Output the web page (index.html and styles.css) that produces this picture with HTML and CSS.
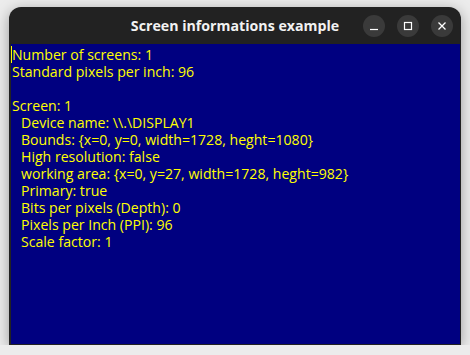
FILE: index.html
```html
<!DOCTYPE html>
<html lang="en">
<head>
    <meta charset="UTF-8">
    <title>Screen informations example</title>
    <link rel="stylesheet" href="styles.css">
</head>
<body>
    <div class="janela">
        <div class="titulo">
            <span class="titulo-texto">Screen informations example</span>
            <div class="botoes">
                <button class="botao">
                    <svg width="10" height="10" viewBox="0 0 10 10"><path d="M1 8.5h8" stroke="#fff" stroke-width="1.2"/></svg>
                </button>
                <button class="botao">
                    <svg width="10" height="10" viewBox="0 0 10 10"><rect x="1.5" y="1.5" width="7" height="7" fill="none" stroke="#fff" stroke-width="1.2"/></svg>
                </button>
                <button class="botao">
                    <svg width="10" height="10" viewBox="0 0 10 10"><path d="M1.5 1.5l7 7M8.5 1.5l-7 7" stroke="#fff" stroke-width="1.3"/></svg>
                </button>
            </div>
        </div>
        <div class="conteudo">
            <div class="linha"><span class="cursor"></span>Number of screens: 1</div>
            <div class="linha">Standard pixels per inch: 96</div>
            <div class="linha"></div>
            <div class="linha">Screen: 1</div>
            <div class="linha recuo">Device name: \\.\DISPLAY1</div>
            <div class="linha recuo">Bounds: {x=0, y=0, width=1728, heght=1080}</div>
            <div class="linha recuo">High resolution: false</div>
            <div class="linha recuo">working area: {x=0, y=27, width=1728, heght=982}</div>
            <div class="linha recuo">Primary: true</div>
            <div class="linha recuo">Bits per pixels (Depth): 0</div>
            <div class="linha recuo">Pixels per Inch (PPI): 96</div>
            <div class="linha recuo">Scale factor: 1</div>
        </div>
    </div>
</body>
</html>
```

FILE: styles.css
```css
body {
    margin: 0;
    background-color: #ececec;
    font-family: "Open Sans", sans-serif;
    padding: 7px 9px 0 9px;
}

.janela {
    width: 452px;
    height: 338px;
    display: flex;
    flex-direction: column;
    background-color: #222;
    border-radius: 12px 12px 0 0;
    box-shadow: 0 3px 14px rgba(0,0,0,0.35);
}

.titulo {
    height: 37px;
    position: relative;
    display: flex;
    align-items: center;
    justify-content: center;
}

.titulo-texto {
    color: #f2f2f2;
    font-weight: bold;
    font-size: 14.2px;
}

.botoes {
    position: absolute;
    right: 8px;
    top: 8px;
    display: flex;
    gap: 12px;
}

.botao {
    width: 22px;
    height: 22px;
    border-radius: 50%;
    border: none;
    padding: 0;
    background-color: #3a3a3a;
    display: flex;
    align-items: center;
    justify-content: center;
}

.conteudo {
    flex: 1;
    margin: 0 1px 1px 2px;
    background-color: #000080;
    color: #ffff00;
    font-size: 14.1px;
    padding-top: 2px;
    padding-left: 1px;
}

.linha {
    height: 17px;
    line-height: 17px;
    white-space: pre;
    position: relative;
}

.recuo {
    padding-left: 9px;
}

.cursor {
    position: absolute;
    left: -1px;
    top: 0;
    width: 1px;
    height: 17px;
    background-color: #ffff00;
}
```
